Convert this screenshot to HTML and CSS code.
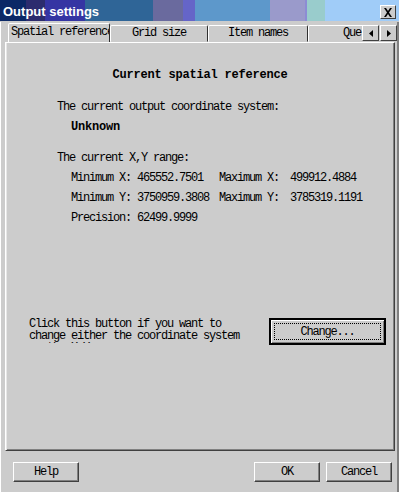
FILE: index.html
```html
<!DOCTYPE html>
<html lang="en">
<head>
    <meta charset="UTF-8">
    <title>Output settings</title>
    <link rel="stylesheet" href="styles.css">
</head>
<body>

    <div class="window">
        <div class="titlebar">
            <span class="title">Output settings</span>
            <span class="close">
                <svg width="10" height="9" viewBox="0 0 10 9"><path d="M1 0h2l2 3 2-3h2L6 4.5 9 9H7L5 6 3 9H1l3-4.5z" fill="#000"/></svg>
            </span>
        </div>

        <div class="client">
            <div class="tabrow">
                <div class="tabs">
                    <div class="tab active">Spatial reference</div>
                    <div class="tab w98">Grid size</div>
                    <div class="tab">Item names</div>
                    <div class="tab">Query</div>
                </div>
                <div class="spin">
                    <span class="spin-btn"><svg width="4" height="7" viewBox="0 0 4 7"><path d="M4 0v7L0 3.5z" fill="#000"/></svg></span>
                    <span class="spin-btn"><svg width="4" height="7" viewBox="0 0 4 7"><path d="M0 0v7l4-3.5z" fill="#000"/></svg></span>
                </div>
            </div>

            <div class="panel">
                <div class="heading">Current spatial reference</div>

                <div class="line gap12">The current output coordinate system:</div>
                <div class="line indent bold">Unknown</div>

                <div class="line gap11">The current X,Y range:</div>
                <div class="range">
                    <span>Minimum X: 465552.7501</span><span>Maximum X:</span><span>499912.4884</span>
                    <span>Minimum Y: 3750959.3808</span><span>Maximum Y:</span><span>3785319.1191</span>
                    <span>Precision: 62499.9999</span>
                </div>

                <div class="change-row">
                    <div class="hint">Click this button if you want to change either the coordinate system or the X,Y range.</div>
                    <button class="btn default"><span class="focus">Change...</span></button>
                </div>
            </div>

            <div class="footer">
                <button class="btn small">Help</button>
                <div class="footer-right">
                    <button class="btn small">OK</button>
                    <button class="btn small">Cancel</button>
                </div>
            </div>
        </div>
    </div>

</body>
</html>
```

FILE: styles.css
```css
* {
    box-sizing: border-box;
}
body {
    margin: 0;
    background: #cccccc;
    font-family: "Liberation Mono", "DejaVu Sans Mono", monospace;
    font-size: 12px;
    letter-spacing: -1.2px;
    color: #000;
}
.window {
    width: 399px;
    height: 492px;
    background: #cccccc;
    overflow: hidden;
}
.titlebar {
    height: 21px;
    display: flex;
    align-items: center;
    justify-content: space-between;
    padding: 0 3px 0 3px;
    background: linear-gradient(to right,
        #0b2866 0 26px, #2c2c6e 26px 45px, #3535a3 45px 85px,
        #2f6597 85px 153px, #6a6a9e 153px 183px, #6565c8 183px 195px,
        #5d98cb 195px 270px, #9a9acb 270px 305px, #8c8cd4 305px 307px,
        #99cccc 307px 325px, #a0ccf8 325px);
}
.title {
    font-family: "Liberation Sans", Arial, sans-serif;
    font-weight: bold;
    font-size: 13px;
    letter-spacing: 0;
    color: #fff;
    margin-top: 2px;
}
.close {
    width: 16px;
    height: 14px;
    margin-top: 3px;
    background: #cccccc;
    border: 1px solid;
    border-color: #fff #404040 #404040 #fff;
    display: flex;
    align-items: center;
    justify-content: center;
}
.client {
    height: 471px;
    border-left: 1px solid #fff;
    border-right: 2px solid #808080;
    border-bottom: 1px dotted #404040;
}
.tabrow {
    display: flex;
    height: 20px;
    margin-top: 1px;
    padding-left: 7px;
    position: relative;
    z-index: 1;
}
.tabs {
    display: flex;
    width: 354px;
    overflow: hidden;
    align-items: flex-end;
}
.tab {
    flex: none;
    width: 100px;
    height: 17px;
    border: 1px solid;
    border-color: #fff #303030 transparent #fff;
    border-radius: 2px 2px 0 0;
    text-align: center;
    line-height: 15px;
    white-space: nowrap;
    overflow: hidden;
    background: #cccccc;
}
.tab.w98 {
    width: 98px;
}
.tab.active {
    width: 102px;
    height: 20px;
    margin-bottom: -1px;
    text-align: left;
    padding-left: 2px;
    line-height: 17px;
}
.spin {
    display: flex;
    align-items: flex-end;
    gap: 1px;
    padding-bottom: 1px;
}
.spin-btn {
    width: 17px;
    height: 16px;
    border: 1px solid;
    border-color: #fff #404040 #404040 #fff;
    display: flex;
    align-items: center;
    justify-content: center;
}
.panel {
    margin-left: 4px;
    width: 390px;
    height: 409px;
    border: 1px solid;
    border-color: #fff #404040 #404040 #fff;
    box-shadow: inset 1px 0 0 #e6e6e6, inset -1px -1px 0 #808080;
    padding: 22px 0 0 51px;
}
.heading {
    font-weight: bold;
    letter-spacing: -0.2px;
    text-align: center;
    line-height: 20px;
    margin-left: -51px;
}
.line {
    line-height: 20px;
}
.gap12 {
    margin-top: 12px;
}
.gap11 {
    margin-top: 11px;
}
.indent {
    padding-left: 14px;
}
.bold {
    font-weight: bold;
    letter-spacing: -0.2px;
}
.range {
    display: grid;
    grid-template-columns: 148px 71px auto;
    line-height: 20px;
    padding-left: 14px;
    white-space: nowrap;
}
.change-row {
    display: flex;
    justify-content: space-between;
    margin-top: 90px;
    margin-left: -28px;
    padding-right: 8px;
}
.hint {
    width: 220px;
    height: 25px;
    line-height: 12px;
    overflow: hidden;
}
.btn {
    font-family: inherit;
    font-size: 12px;
    letter-spacing: -1.2px;
    color: #000;
    background: #cccccc;
    border: 1px solid;
    border-color: #fff #404040 #404040 #fff;
    box-shadow: inset -1px -1px 0 #808080;
    padding: 0;
    cursor: pointer;
}
.btn.default {
    width: 117px;
    height: 27px;
    border: 2px solid #000;
    box-shadow: inset 1px 1px 0 #fff, inset -1px -1px 0 #808080;
    padding: 3px;
}
.focus {
    display: block;
    height: 100%;
    border: 1px dotted #000;
    line-height: 17px;
}
.footer {
    display: flex;
    justify-content: space-between;
    margin-top: 11px;
    padding: 0 5px 0 12px;
}
.footer-right {
    display: flex;
    gap: 6px;
}
.btn.small {
    width: 66px;
    height: 20px;
    line-height: 18px;
}
```
